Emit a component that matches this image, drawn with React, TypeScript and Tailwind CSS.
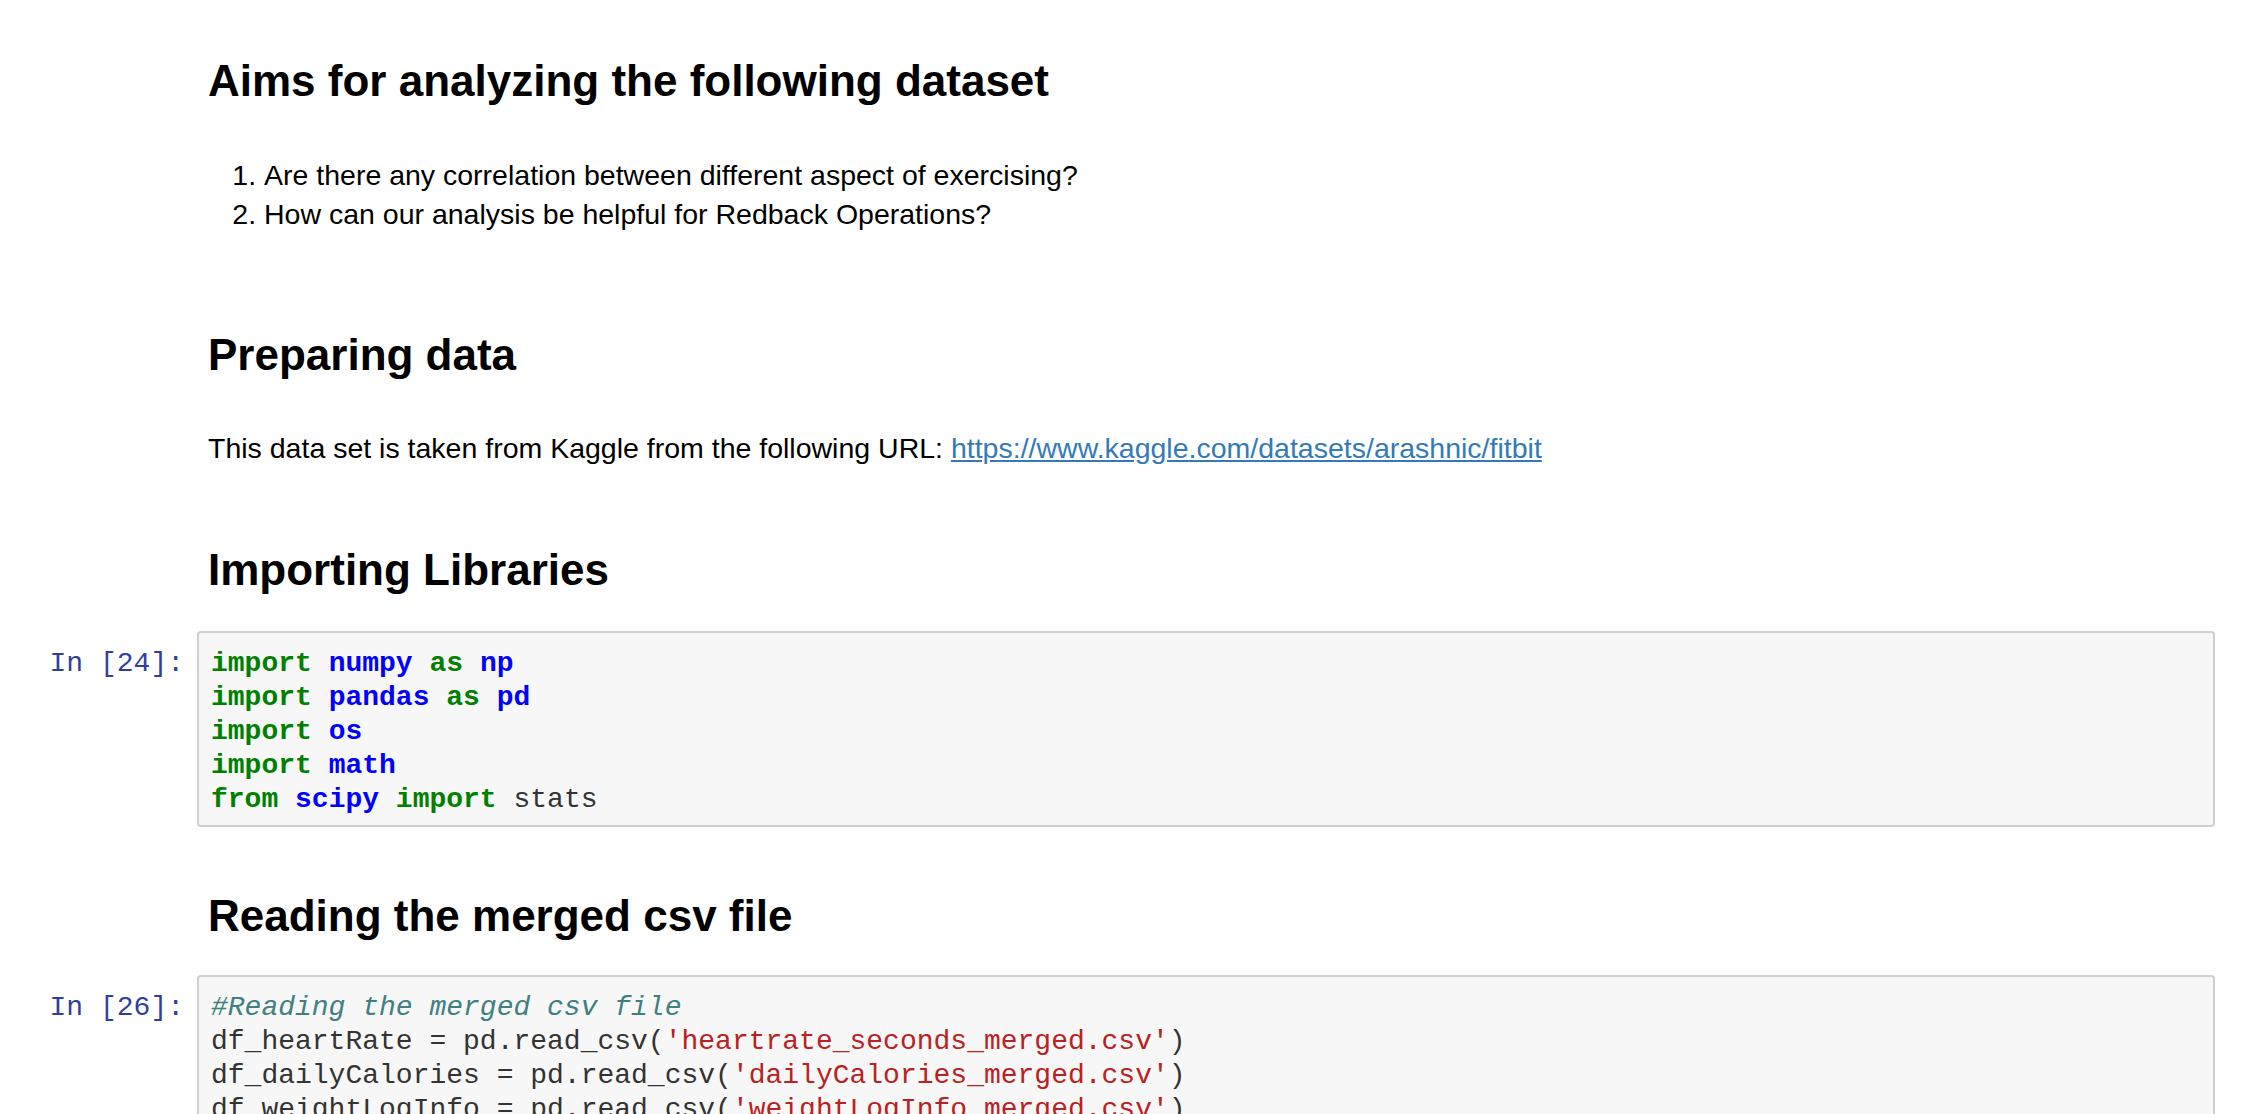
const sans = "font-['Liberation_Sans','Helvetica_Neue',Arial,sans-serif]";
const mono = "font-['Liberation_Mono','Courier_New',monospace]";

function Heading({ children, className = "" }: { children: React.ReactNode; className?: string }) {
  return (
    <h2 className={`pl-[208px] text-[44px] leading-[44px] font-bold text-black ${sans} ${className}`}>
      {children}
    </h2>
  );
}

function Kw({ children }: { children: React.ReactNode }) {
  return <span className="font-bold text-[#008000]">{children}</span>;
}

function Mod({ children }: { children: React.ReactNode }) {
  return <span className="font-bold text-[#0000ff]">{children}</span>;
}

function Str({ children }: { children: React.ReactNode }) {
  return <span className="text-[#ba2121]">{children}</span>;
}

function CodeCell({
  count,
  children,
  className = ""
}: {
  count: number;
  children: React.ReactNode;
  className?: string;
}) {
  return (
    <div className={`flex text-[28px] leading-[34px] ${mono} ${className}`}>
      <div className="w-[197px] shrink-0 pt-[16px] pr-[13px] text-right text-[#303f9f] whitespace-pre">
        In [{count}]:
      </div>
      <div className="min-w-0 flex-1 rounded-[4px] border-2 border-[#cfcfcf] bg-[#f7f7f7] pt-[14px] pb-[8px] pl-[12px] text-[#333] whitespace-pre">
        {children}
      </div>
    </div>
  );
}

export default function App() {
  return (
    <div className="h-[1114px] overflow-hidden bg-white pt-[59px] pr-[37px]">
      <Heading>Aims for analyzing the following dataset</Heading>

      <ol className={`mt-[53px] list-decimal pl-[264px] text-[28.5px] leading-[38.5px] text-black ${sans}`}>
        <li>Are there any correlation between different aspect of exercising?</li>
        <li>How can our analysis be helpful for Redback Operations?</li>
      </ol>

      <Heading className="mt-[100px]">Preparing data</Heading>

      <p className={`mt-[52px] pl-[208px] text-[28.5px] leading-[38.5px] text-black ${sans}`}>
        This data set is taken from Kaggle from the following URL:{" "}
        <a href="#" className="text-[#337ab7] underline">
          https://www.kaggle.com/datasets/arashnic/fitbit
        </a>
      </p>

      <Heading className="mt-[80px]">Importing Libraries</Heading>

      <CodeCell count={24} className="mt-[39px]">
        <div>
          <Kw>import</Kw> <Mod>numpy</Mod> <Kw>as</Kw> <Mod>np</Mod>
        </div>
        <div>
          <Kw>import</Kw> <Mod>pandas</Mod> <Kw>as</Kw> <Mod>pd</Mod>
        </div>
        <div>
          <Kw>import</Kw> <Mod>os</Mod>
        </div>
        <div>
          <Kw>import</Kw> <Mod>math</Mod>
        </div>
        <div>
          <Kw>from</Kw> <Mod>scipy</Mod> <Kw>import</Kw> stats
        </div>
      </CodeCell>

      <Heading className="mt-[67px]">Reading the merged csv file</Heading>

      <CodeCell count={26} className="mt-[37px]">
        <div className="italic text-[#408080]">#Reading the merged csv file</div>
        <div>
          df_heartRate = pd.read_csv(<Str>'heartrate_seconds_merged.csv'</Str>)
        </div>
        <div>
          df_dailyCalories = pd.read_csv(<Str>'dailyCalories_merged.csv'</Str>)
        </div>
        <div>
          df_weightLogInfo = pd.read_csv(<Str>'weightLogInfo_merged.csv'</Str>)
        </div>
        <div>
          df_dailyActivity = pd.read_csv(<Str>'dailyActivity_merged.csv'</Str>)
        </div>
      </CodeCell>
    </div>
  );
}
